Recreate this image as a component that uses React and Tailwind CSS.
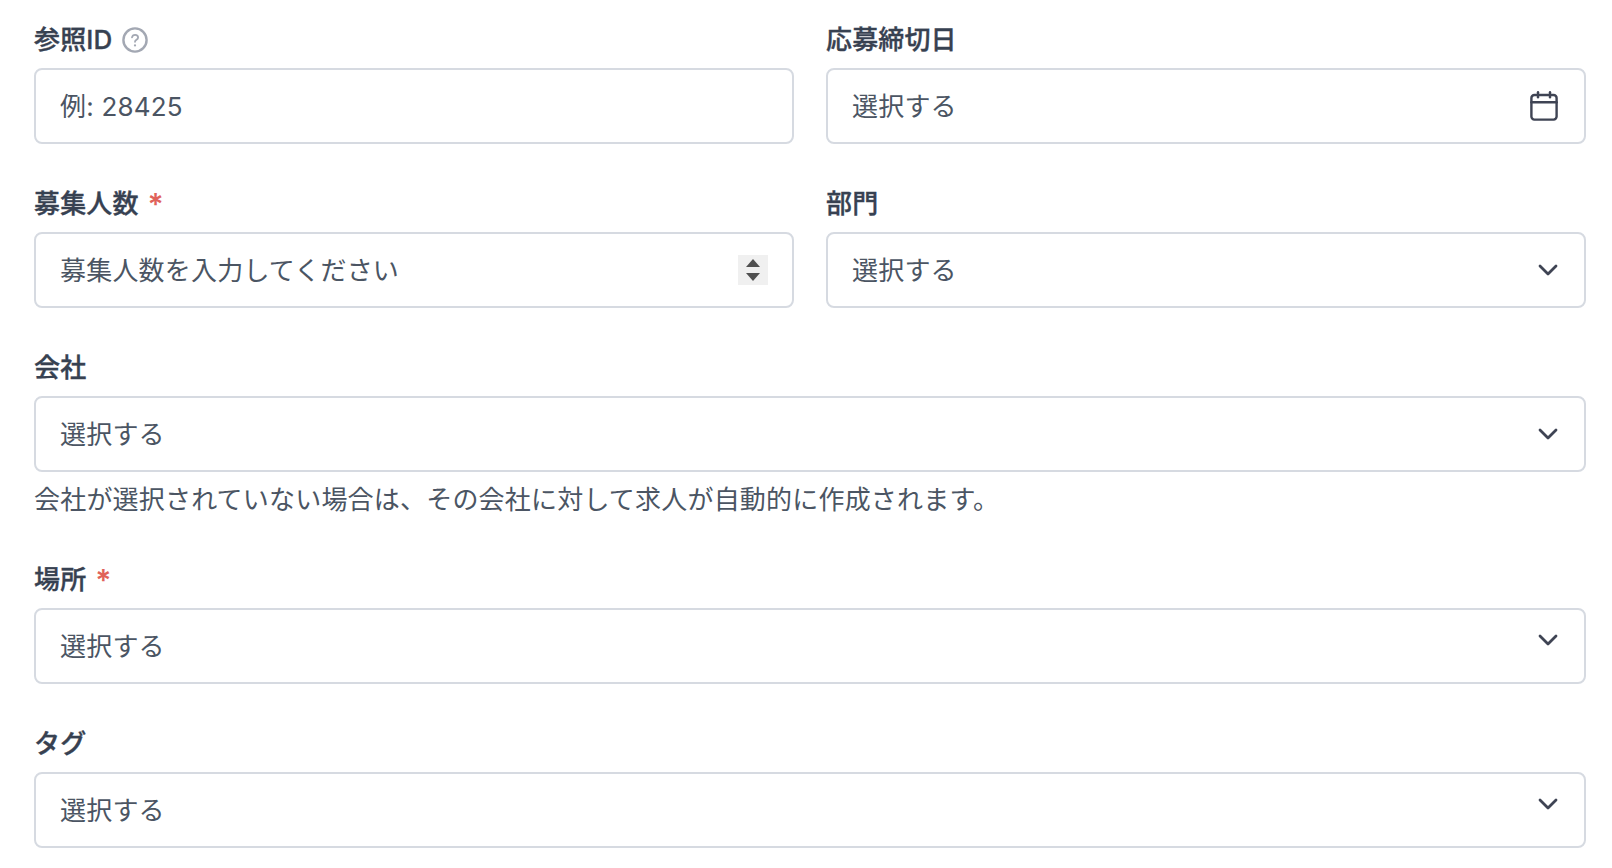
import React from 'react';
import { ChevronDown } from 'lucide-react';

const fontStack = "font-['Inter','Noto_Sans_CJK_JP',sans-serif]";

const Label = ({ children, required, help }) => (
  <div className="flex items-center h-[32px] mb-[12px] text-[26px] leading-[32px] font-medium tracking-[0.15px] text-[#374151]">
    <span className="[-webkit-text-stroke:0.35px_#374151]">{children}</span>
    {required && <span className="ml-[9px] text-[30px] leading-[32px] font-semibold text-[#e0625a]">*</span>}
    {help && (
      <svg className="ml-[10px]" width="26" height="26" viewBox="0 0 26 26" fill="none" stroke="#a3a8b3" strokeWidth="2.4" strokeLinecap="round">
        <circle cx="13" cy="13" r="11.6" />
        <path d="M10 10.4c.3-1.7 1.5-2.6 3.1-2.6 1.7 0 3 1.1 3 2.6 0 2.4-3.1 2.3-3.1 4.4" strokeWidth="1.8" />
        <path d="M13 18.3v.1" strokeWidth="2.2" />
      </svg>
    )}
  </div>
);

const Box = ({ children, right }) => (
  <div className="flex items-center justify-between h-[76px] pl-[24px] pr-[25px] bg-white border-2 border-[#d6dae1] rounded-[8px]">
    <span className="text-[26px] tracking-[0.2px] text-[#4b5563]">{children}</span>
    {right}
  </div>
);

const Chevron = ({ raised }) => (
  <ChevronDown size={32} strokeWidth={2.1} className={raised ? 'text-[#3f4454] -mt-[12px] -mr-[5px]' : 'text-[#3f4454] -mr-[5px]'} />
);

const CalendarIcon = () => (
  <svg className="mr-[1px]" width="28" height="30" viewBox="0 0 28 30" fill="none" stroke="#3f4454" strokeWidth="2.4" strokeLinecap="round" strokeLinejoin="round">
    <rect x="1.4" y="4" width="25.2" height="24.6" rx="3" />
    <path d="M1.4 11.2h25.2" />
    <path d="M8 1.2v5" />
    <path d="M20 1.2v5" />
  </svg>
);

const Spinner = () => (
  <div className="flex flex-col items-center justify-center gap-[6px] w-[30px] h-[30px] -mr-[1px] bg-[#f0f0f0]">
    <svg width="14" height="8" viewBox="0 0 14 8"><path d="M7 0l7 8H0z" fill="#505050" /></svg>
    <svg width="14" height="8" viewBox="0 0 14 8"><path d="M0 0h14L7 8z" fill="#505050" /></svg>
  </div>
);

const App = () => {
  return (
    <div className={`${fontStack} w-[1612px] h-[868px] overflow-hidden bg-white pt-[24px] pl-[34px] pr-[26px]`}>
      <div className="grid grid-cols-[760px_760px] gap-x-[32px]">
        <div>
          <Label help>参照ID</Label>
          <Box>例: 28425</Box>
        </div>
        <div>
          <Label>応募締切日</Label>
          <Box right={<CalendarIcon />}>選択する</Box>
        </div>
      </div>

      <div className="grid grid-cols-[760px_760px] gap-x-[32px] mt-[44px]">
        <div>
          <Label required>募集人数</Label>
          <Box right={<Spinner />}>募集人数を入力してください</Box>
        </div>
        <div>
          <Label>部門</Label>
          <Box right={<Chevron />}>選択する</Box>
        </div>
      </div>

      <div className="mt-[44px]">
        <Label>会社</Label>
        <Box right={<Chevron />}>選択する</Box>
        <p className="mt-[10px] text-[26px] leading-[36px] tracking-[0.2px] text-[#4b5563]">
          会社が選択されていない場合は、その会社に対して求人が自動的に作成されます。
        </p>
      </div>

      <div className="mt-[46px]">
        <Label required>場所</Label>
        <Box right={<Chevron raised />}>選択する</Box>
      </div>

      <div className="mt-[44px]">
        <Label>タグ</Label>
        <Box right={<Chevron raised />}>選択する</Box>
      </div>
    </div>
  );
};

export default App;
